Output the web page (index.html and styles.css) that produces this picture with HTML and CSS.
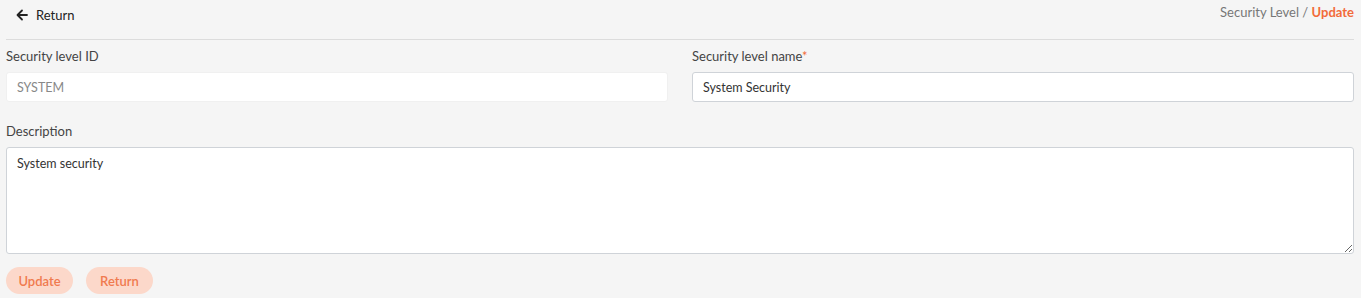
FILE: index.html
```html
<!DOCTYPE html>
<html lang="en">
  <head>
    <meta charset="UTF-8" />
    <meta name="viewport" content="width=device-width, initial-scale=1.0" />
    <title>Security Level - Update</title>
    <link rel="stylesheet" href="styles.css">
  </head>
  <body>
    <div class="page">
      <div class="topbar">
        <a class="back" href="#">
          <svg width="12" height="12" viewBox="0 0 12 12"><path d="M11 6H2M6 1.5L1.5 6L6 10.5" fill="none" stroke="#222" stroke-width="1.8" stroke-linecap="round" stroke-linejoin="round"/></svg>
          <span>Return</span>
        </a>
        <div class="crumbs">Security Level / <b>Update</b></div>
      </div>

      <div class="row">
        <div class="field">
          <label for="levelId">Security level ID</label>
          <input type="text" id="levelId" value="SYSTEM" disabled />
        </div>
        <div class="field">
          <label for="levelName">Security level name<span class="req">*</span></label>
          <input type="text" id="levelName" value="System Security" />
        </div>
      </div>

      <div class="field">
        <label for="description">Description</label>
        <textarea id="description">System security</textarea>
      </div>

      <div class="actions">
        <button class="btn">Update</button>
        <button class="btn">Return</button>
      </div>
    </div>
  </body>
</html>
```

FILE: styles.css
```css
body {
  font-family: Lato, "Noto Sans", sans-serif;
  font-size: 13px;
  color: #333;
  background-color: #f5f5f5;
  margin: 0;
}
.page {
  padding: 0 7px 0 6px;
}
.topbar {
  display: flex;
  justify-content: space-between;
  align-items: flex-start;
  height: 39px;
  border-bottom: 1px solid #dcdcdc;
}
.back {
  display: flex;
  align-items: center;
  gap: 8px;
  margin: 7px 0 0 10px;
  color: #222;
  text-decoration: none;
}
.crumbs {
  margin-top: 4px;
  color: #777;
}
.crumbs b {
  color: #f26b3a;
}
.row {
  display: grid;
  grid-template-columns: 1fr 1fr;
  gap: 24px;
}
.field {
  display: flex;
  flex-direction: column;
}
.field label {
  margin: 8px 0 8px;
  color: #444;
}
.req {
  color: #f26b3a;
}
.field input,
.field textarea {
  font-family: inherit;
  font-size: 12.5px;
  color: #333;
  background: #fff;
  border: 1px solid #cfd3d8;
  border-radius: 3px;
  padding: 0 10px;
  height: 30px;
  box-sizing: border-box;
  outline: none;
}
.field input:disabled {
  border-color: #f0f0f0;
  color: #888;
}
.field textarea {
  height: 107px;
  padding: 8px 10px;
}
.row + .field label {
  margin-top: 21px;
}
.actions {
  display: flex;
  gap: 13px;
  margin-top: 13px;
}
.btn {
  font-family: inherit;
  font-size: 13px;
  font-weight: 600;
  color: #f07a4f;
  background-color: #fcd8ca;
  border: none;
  border-radius: 14px;
  height: 27px;
  min-width: 67px;
  padding: 0 12px;
  cursor: pointer;
}
```
